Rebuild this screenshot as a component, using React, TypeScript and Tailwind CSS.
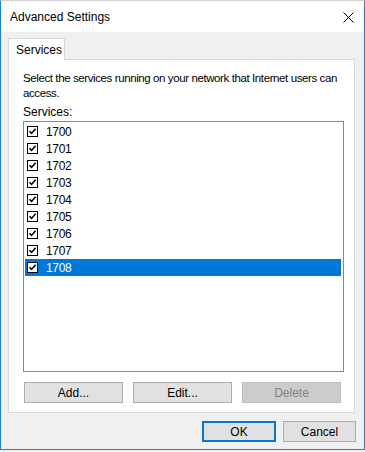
import React from 'react';

const services = ['1700', '1701', '1702', '1703', '1704', '1705', '1706', '1707', '1708'];

const CheckBox: React.FC = () => (
  <div className="w-[11px] h-[11px] border border-black bg-white flex items-center justify-center shrink-0">
    <svg width="9" height="9" viewBox="0 0 9 9">
      <path d="M1.5 4.2 L3.6 6.4 L7.6 1.8" fill="none" stroke="#000" strokeWidth="1.6" />
    </svg>
  </div>
);

const ServiceRow: React.FC<{ name: string; selected?: boolean }> = ({ name, selected }) => (
  <div
    className={`h-[17px] w-[316px] flex items-center pl-[2px] gap-[8px] ${
      selected ? 'bg-[#0078d7] text-white' : 'text-black'
    }`}
  >
    <CheckBox />
    <span className="leading-none tracking-[-0.3px]">{name}</span>
  </div>
);

const Button: React.FC<{ label: string; disabled?: boolean; className?: string }> = ({ label, disabled, className }) => (
  <div
    className={`h-[21px] flex items-center justify-center border ${
      disabled ? 'bg-[#cccccc] border-[#bfbfbf] text-[#838383]' : 'bg-[#e1e1e1] border-[#adadad] text-black'
    } ${className ?? ''}`}
  >
    {label}
  </div>
);

export default function App() {
  return (
    <div className="w-[365px] h-[452px] bg-[#f0f0f0] text-[12px] font-['Liberation_Sans',Arial,sans-serif]">
      <div className="w-[365px] h-[450px] border border-[#1883d7] border-t-[#d4d4d4] bg-[#f0f0f0] flex flex-col">
        {/* Title bar */}
        <div className="h-[31px] bg-white flex items-center justify-between pl-[9px] pr-[10px] pt-px shrink-0">
          <span className="text-black">Advanced Settings</span>
          <svg width="11" height="11" viewBox="0 0 11 11">
            <path d="M0.5 0.5 L10.5 10.5 M10.5 0.5 L0.5 10.5" stroke="#000" strokeWidth="1" />
          </svg>
        </div>

        {/* Body */}
        <div className="pl-[7px] pt-[6px] flex flex-col">
          <div className="relative z-10 -mb-px w-[57px] h-[22px] bg-white border border-b-0 border-[#d9d9d9] flex items-center pl-[7px]">
            Services
          </div>
          <div className="w-[347px] h-[354px] bg-white border border-[#d9d9d9] pl-[14px] pt-[11px] flex flex-col">
            <p className="leading-[15px] w-[325px] text-[11.5px] tracking-[-0.4px] text-black">
              Select the services running on your network that Internet users can access.
            </p>
            <p className="leading-[15px] mt-[4px] text-black">Services:</p>
            <div className="mt-px w-[321px] h-[251px] border border-[#828790] pt-px pl-px">
              {services.map((s) => (
                <ServiceRow key={s} name={s} selected={s === '1708'} />
              ))}
            </div>
            <div className="mt-[10px] flex gap-[10px] pl-px">
              <Button label="Add..." className="w-[99px]" />
              <Button label="Edit..." className="w-[99px]" />
              <Button label="Delete" disabled className="w-[99px]" />
            </div>
          </div>
        </div>

        {/* Footer */}
        <div className="flex justify-end gap-[7px] pr-[8px] pt-[8px]">
          <div className="w-[74px] h-[21px] bg-[#e1e1e1] border-2 border-[#0078d7] flex items-center justify-center">OK</div>
          <Button label="Cancel" className="w-[73px]" />
        </div>
      </div>
    </div>
  );
}
